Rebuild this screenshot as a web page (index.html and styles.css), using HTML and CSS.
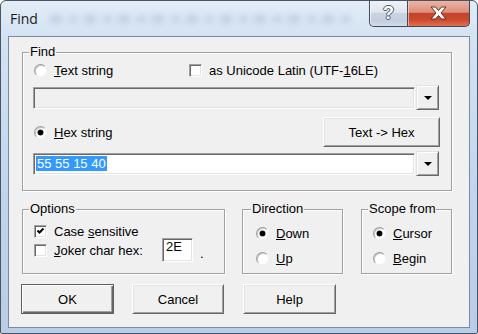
FILE: index.html
```html
<!DOCTYPE html>
<html>
<head>
<meta charset="utf-8">
<title>Find</title>
<link rel="stylesheet" href="styles.css">
</head>
<body>
<div class="window">
  <div class="titlebar">
    <span class="title">Find</span>
    <div class="glass"></div>
    <div class="caption">
      <div class="cap-help"><span class="q">?</span></div>
      <div class="cap-close">
        <svg width="17" height="14" viewBox="0 0 17 14"><path d="M1 1H5.5L8.5 4.5L11.5 1H16L11 7L16 13H11.5L8.5 9.5L5.5 13H1L6 7Z" fill="#fff" stroke="#6b2a1c" stroke-width="1" stroke-linejoin="round"/></svg>
      </div>
    </div>
  </div>
  <div class="client">
    <div class="group find-group">
      <div class="group-label">Find</div>
      <div class="row row-top">
        <label class="opt opt-wide"><span class="radio"></span><span class="lbl"><u>T</u>ext string</span></label>
        <label class="opt"><span class="check"></span><span class="lbl">as Unicode Latin (UTF-<u>1</u>6LE)</span></label>
      </div>
      <div class="combo combo-first">
        <div class="field disabled"></div>
        <div class="dropbtn"><span class="tri"></span></div>
      </div>
      <div class="row row-hex">
        <label class="opt"><span class="radio on"></span><span class="lbl"><u>H</u>ex string</span></label>
        <div class="btn texthex">Text -&gt; Hex</div>
      </div>
      <div class="combo combo-second">
        <div class="field"><span class="sel">55 55 15 40</span></div>
        <div class="dropbtn"><span class="tri"></span></div>
      </div>
    </div>

    <div class="groups-row">
      <div class="group options">
        <div class="group-label">Options</div>
        <div class="row row-case">
          <label class="opt"><span class="check on"><svg width="9" height="9" viewBox="0 0 9 9"><path d="M1.5 3.5L3.5 5.5L7.5 1.5" fill="none" stroke="#000" stroke-width="2"/></svg></span><span class="lbl">Case <u>s</u>ensitive</span></label>
        </div>
        <div class="row row-joker">
          <label class="opt"><span class="check"></span><span class="lbl joker-lbl"><u>J</u>oker char hex:</span></label>
          <div class="small-field">2E</div>
          <span class="dot">.</span>
        </div>
      </div>
      <div class="group direction">
        <div class="group-label">Direction</div>
        <div class="row row-r1">
          <label class="opt"><span class="radio on"></span><span class="lbl"><u>D</u>own</span></label>
        </div>
        <div class="row row-r2">
          <label class="opt"><span class="radio"></span><span class="lbl"><u>U</u>p</span></label>
        </div>
      </div>
      <div class="group scope">
        <div class="group-label">Scope from</div>
        <div class="row row-r1">
          <label class="opt"><span class="radio on"></span><span class="lbl"><u>C</u>ursor</span></label>
        </div>
        <div class="row row-r2">
          <label class="opt"><span class="radio"></span><span class="lbl"><u>B</u>egin</span></label>
        </div>
      </div>
    </div>

    <div class="buttons">
      <div class="btn default b-ok">OK</div>
      <div class="btn b-cancel">Cancel</div>
      <div class="btn b-help">Help</div>
    </div>
  </div>
</div>
</body>
</html>
```
FILE: styles.css
```css
* { box-sizing: border-box; }
body {
  margin: 0;
  background: #fff;
  font-family: "Liberation Sans", Arial, sans-serif;
  font-size: 13px;
  color: #000;
}
u { text-decoration: underline; text-underline-offset: 1px; }

.window {
  width: 478px;
  height: 334px;
  border: 1px solid #4a5462;
  border-radius: 6px 6px 2px 2px;
  background: linear-gradient(180deg, #e3ecf7 0, #d4e3f3 34px, #c0d4ec 60%, #b9cde6 100%);
  padding: 0 7px 5px 7px;
  display: flex;
  flex-direction: column;
}

.titlebar {
  height: 35px;
  display: flex;
  align-items: flex-start;
}
.title {
  font-family: "Open Sans", "Noto Sans", sans-serif;
  font-size: 14px;
  line-height: 20px;
  margin: 8px 0 0 2px;
  color: #1b1b1b;
}
.glass {
  flex: 1;
  height: 8px;
  margin: 14px 16px 0 12px;
  background: repeating-linear-gradient(90deg, rgba(120,140,170,.6) 0 12px, transparent 12px 19px, rgba(120,140,170,.5) 19px 28px, transparent 28px 34px);
  filter: blur(3px);
  opacity: .45;
}
.caption {
  display: flex;
  height: 26px;
}
.cap-help {
  width: 38px;
  height: 26px;
  border: 1px solid #3f4a5a;
  border-top: none;
  border-right: none;
  border-radius: 0 0 0 5px;
  background: linear-gradient(180deg, #eef2f7 0%, #dfe6ef 45%, #c9d4e2 50%, #c3cfdf 80%, #d2dcea 100%);
  box-shadow: inset 1px 0 0 rgba(255,255,255,.7);
  display: flex;
  justify-content: center;
  align-items: center;
}
.q {
  font-family: "Liberation Sans", Arial, sans-serif;
  font-weight: bold;
  font-size: 18px;
  line-height: 18px;
  color: #fff;
  text-shadow: 1px 0 0 #4d5868, -1px 0 0 #4d5868, 0 1px 0 #4d5868, 0 -1px 0 #4d5868;
  margin-top: -2px;
}
.cap-close {
  width: 63px;
  height: 26px;
  border: 1px solid #3f4a5a;
  border-top: none;
  border-radius: 0 0 5px 0;
  background: linear-gradient(180deg, #ecb3a5 0%, #dc8f7c 45%, #c5432a 50%, #c94a2f 75%, #e2714f 100%);
  box-shadow: inset 1px 0 0 rgba(255,220,210,.6);
  display: flex;
  justify-content: center;
  align-items: center;
}
.cap-close svg { display: block; margin-top: -1px; }

.client {
  flex: 1;
  border: 1px solid #7c8ba1;
  background: #f0f0f0;
}

/* group boxes */
.group {
  border: 1px solid #a0a0a0;
  box-shadow: inset 1px 1px 0 #fff, 1px 1px 0 #fff;
  display: flex;
  flex-direction: column;
  align-items: flex-start;
}
.group-label {
  margin: -9px 0 0 6px;
  padding: 0 1px;
  background: #f0f0f0;
  line-height: 15px;
}
.find-group {
  margin: 15px 0 0 13px;
  width: 430px;
  height: 139px;
}

.row {
  display: flex;
  align-items: center;
  line-height: 15px;
}
.opt {
  display: flex;
  align-items: center;
}
.lbl { margin-left: 7px; white-space: nowrap; }

.row-top { margin-top: 3px; height: 16px; padding-left: 11px; }
.opt-wide { width: 155px; }

.row-hex {
  margin-top: 7px;
  height: 30px;
  width: 100%;
  padding: 0 11px;
  justify-content: space-between;
}

/* radio & checkbox */
.radio {
  width: 13px;
  height: 13px;
  border-radius: 50%;
  background: #fff;
  border: 1px solid;
  border-color: #9d9d9d #f4f4f4 #f4f4f4 #9d9d9d;
  box-shadow: inset 1px 1px 0 #c8c8c8;
  display: flex;
  align-items: center;
  justify-content: center;
  flex: none;
}
.radio.on::after {
  content: "";
  width: 5px;
  height: 5px;
  border-radius: 50%;
  background: #000;
  box-shadow: 0 0 0 .5px #333;
}
.check {
  width: 13px;
  height: 13px;
  background: #fff;
  border: 1px solid;
  border-color: #a0a0a0 #fff #fff #a0a0a0;
  box-shadow: inset 1px 1px 0 #696969, inset -1px -1px 0 #e3e3e3;
  padding: 1px;
  display: flex;
  flex: none;
}
.check svg { display: block; }

/* combos & fields */
.combo {
  margin-left: 10px;
  height: 25px;
  display: flex;
  align-items: center;
}
.combo-first { margin-top: 7px; }
.combo-second { margin-top: 4px; }
.field {
  width: 382px;
  height: 22px;
  background: #fff;
  border: 1px solid;
  border-color: #a0a0a0 #fff #fff #a0a0a0;
  box-shadow: inset 1px 1px 0 #696969, inset -1px -1px 0 #e3e3e3;
  padding: 0 2px;
  display: flex;
  align-items: center;
}
.field.disabled { background: #f0f0f0; }
.sel {
  background: #3399ff;
  color: #fff;
  line-height: 15px;
  padding: 0 1px 0 1px;
}
.dropbtn {
  width: 23px;
  height: 25px;
  margin-left: 1px;
  background: #f0f0f0;
  border: 1px solid;
  border-color: #e3e3e3 #696969 #696969 #e3e3e3;
  box-shadow: inset 1px 1px 0 #fff, inset -1px -1px 0 #a0a0a0;
  display: flex;
  align-items: center;
  justify-content: center;
}
.tri {
  width: 0;
  height: 0;
  border-left: 4px solid transparent;
  border-right: 4px solid transparent;
  border-top: 4px solid #000;
}

/* buttons */
.btn {
  background: #f0f0f0;
  border: 1px solid;
  border-color: #fff #696969 #696969 #fff;
  box-shadow: inset 1px 1px 0 #e3e3e3, inset -1px -1px 0 #a0a0a0;
  display: flex;
  align-items: center;
  justify-content: center;
  line-height: 15px;
}
.btn.default {
  border-color: #5f5f5f;
  box-shadow: inset 1px 1px 0 #fff, inset -1px -1px 0 #696969, inset -2px -2px 0 #a0a0a0;
}
.texthex { width: 117px; height: 30px; }

/* lower groups */
.groups-row {
  display: flex;
  margin-top: 18px;
  padding-left: 13px;
}
.options { width: 203px; height: 65px; }
.direction { width: 101px; height: 65px; margin-left: 17px; }
.scope { width: 91px; height: 65px; margin-left: 18px; }
.direction .group-label { margin-left: 8px; }

.row-case { margin-top: 7px; height: 16px; padding-left: 11px; }
.row-joker { margin-top: -1px; height: 24px; padding-left: 11px; }
.joker-lbl { width: 108px; }
.small-field {
  width: 31px;
  height: 24px;
  background: #fff;
  border: 1px solid;
  border-color: #a0a0a0 #fff #fff #a0a0a0;
  box-shadow: inset 1px 1px 0 #696969, inset -1px -1px 0 #e3e3e3;
  padding: 1px 3px 0;
  line-height: 13px;
}
.dot { margin: 6px 0 0 7px; }

.row-r1 { margin-top: 9px; height: 16px; }
.row-r2 { margin-top: 9px; height: 16px; }
.direction .row { padding-left: 13px; }
.scope .row { padding-left: 11px; }

.buttons {
  display: flex;
  margin-top: 10px;
  padding-left: 12px;
}
.buttons .btn { height: 30px; }
.b-ok { width: 93px; }
.b-cancel { width: 92px; margin-left: 18px; }
.b-help { width: 93px; margin-left: 19px; }
```
